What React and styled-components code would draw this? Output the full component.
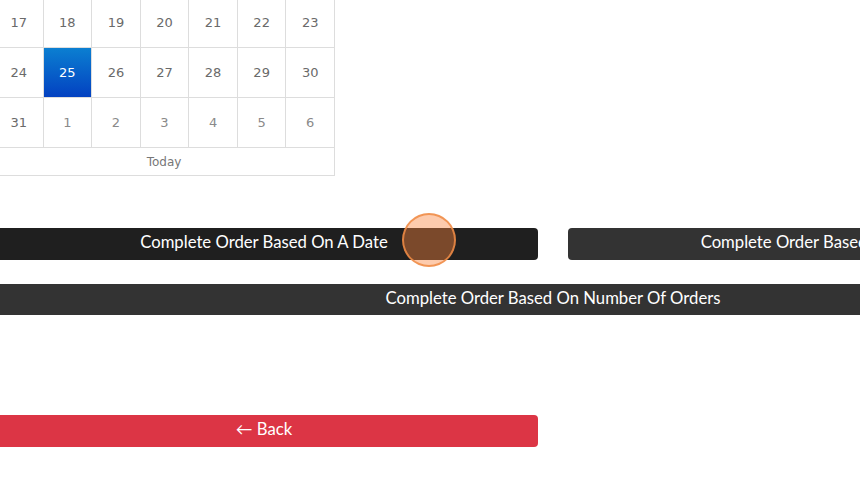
import styled, { createGlobalStyle } from 'styled-components';

const GlobalStyle = createGlobalStyle`
  html, body {
    margin: 0;
    padding: 0;
    background: #fff;
    overflow: hidden;
  }
  body {
    font-family: Lato, "Liberation Sans", sans-serif;
  }
`;

const Page = styled.div`
  position: relative;
  width: 1126px;
  margin: -2px 0 0 -10px;
`;

const Calendar = styled.div`
  width: 340px;
  margin-left: 4px;
  border-right: 1px solid #ddd;
  border-bottom: 1px solid #ddd;
  font-family: "DejaVu Sans", sans-serif;
`;

const Week = styled.div`
  display: grid;
  grid-template-columns: repeat(7, 1fr);
`;

const Day = styled.div`
  height: 50px;
  display: flex;
  align-items: center;
  justify-content: center;
  font-size: 13px;
  color: ${(p) => (p.$active ? '#fff' : p.$muted ? '#8a8a8a' : '#6a6a6a')};
  background: ${(p) => (p.$active ? 'linear-gradient(#0b7fd1, #0341c1)' : 'transparent')};
  border-left: 1px solid #ddd;
  border-bottom: 1px solid #ddd;
  box-sizing: border-box;
`;

const TodayRow = styled.div`
  height: 27px;
  display: flex;
  align-items: center;
  justify-content: center;
  font-size: 12px;
  color: #777;
`;

const Grid = styled.div`
  display: grid;
  grid-template-columns: 548px 548px;
  column-gap: 30px;
  row-gap: 24px;
  margin-top: 52px;
`;

const Button = styled.button`
  height: ${(p) => p.$h || 32}px;
  border: none;
  border-radius: 4px;
  background: ${(p) => p.$bg || '#333'};
  color: #fff;
  font-family: Lato, "Liberation Sans", sans-serif;
  font-size: 16.7px;
  padding: 0 0 ${(p) => p.$lift || 4}px;
  grid-column: ${(p) => (p.$wide ? '1 / span 2' : 'auto')};
  cursor: pointer;
`;

const BackRow = styled.div`
  margin-top: 100px;
  width: 548px;
  display: flex;
`;

const ClickMark = styled.div`
  position: absolute;
  left: 412px;
  top: 215px;
  width: 50px;
  height: 50px;
  border-radius: 50%;
  background: rgba(250, 130, 60, 0.42);
  border: 2px solid rgba(240, 140, 70, 0.85);
  pointer-events: none;
`;

const weeks = [
  [17, 18, 19, 20, 21, 22, 23],
  [24, 25, 26, 27, 28, 29, 30],
  [31, 1, 2, 3, 4, 5, 6],
];

export default function App() {
  return (
    <>
      <GlobalStyle />
      <Page>
        <Calendar>
          {weeks.map((w, i) => (
            <Week key={i}>
              {w.map((d, j) => (
                <Day key={j} $active={i === 1 && d === 25} $muted={i === 2 && j > 0}>
                  {d}
                </Day>
              ))}
            </Week>
          ))}
          <TodayRow>Today</TodayRow>
        </Calendar>

        <Grid>
          <Button $bg="#1f1f1f">Complete Order Based On A Date</Button>
          <Button $bg="#333">Complete Order Based On Date Range</Button>
          <Button $wide $h={31} $lift={3} $bg="#333">
            Complete Order Based On Number Of Orders
          </Button>
        </Grid>

        <BackRow>
          <Button $bg="#dc3545" style={{ flex: 1 }}>
            ← Back
          </Button>
        </BackRow>

        <ClickMark />
      </Page>
    </>
  );
}
